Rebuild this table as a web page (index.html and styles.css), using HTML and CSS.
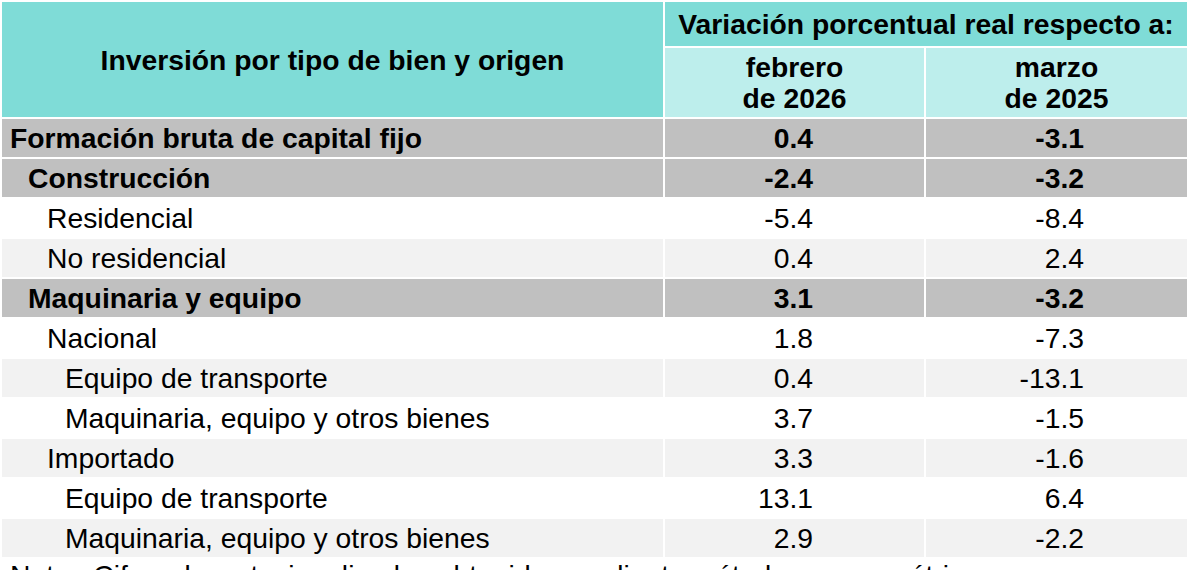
FILE: index.html
```html
<!DOCTYPE html>
<html lang="es">
<head>
<meta charset="utf-8">
<title>Inversión fija bruta</title>
<link rel="stylesheet" href="styles.css">
</head>
<body>
<table class="tabla">
  <colgroup>
    <col class="c-concepto">
    <col class="c-feb">
    <col class="c-mar">
  </colgroup>
  <thead>
    <tr class="h1">
      <th class="th-main" rowspan="2">Inversión por tipo de bien y origen</th>
      <th class="th-var" colspan="2">Variación porcentual real respecto a:</th>
    </tr>
    <tr class="h2">
      <th class="th-sub">febrero<br>de 2026</th>
      <th class="th-sub">marzo<br>de 2025</th>
    </tr>
  </thead>
  <tbody>
    <tr class="row gray bold"><td class="lbl l0">Formación bruta de capital fijo</td><td class="num n1">0.4</td><td class="num n2">-3.1</td></tr>
    <tr class="row gray bold"><td class="lbl l1">Construcción</td><td class="num n1">-2.4</td><td class="num n2">-3.2</td></tr>
    <tr class="row white"><td class="lbl l2">Residencial</td><td class="num n1">-5.4</td><td class="num n2">-8.4</td></tr>
    <tr class="row light"><td class="lbl l2">No residencial</td><td class="num n1">0.4</td><td class="num n2">2.4</td></tr>
    <tr class="row gray bold"><td class="lbl l1">Maquinaria y equipo</td><td class="num n1">3.1</td><td class="num n2">-3.2</td></tr>
    <tr class="row white"><td class="lbl l2">Nacional</td><td class="num n1">1.8</td><td class="num n2">-7.3</td></tr>
    <tr class="row light"><td class="lbl l3">Equipo de transporte</td><td class="num n1">0.4</td><td class="num n2">-13.1</td></tr>
    <tr class="row white"><td class="lbl l3">Maquinaria, equipo y otros bienes</td><td class="num n1">3.7</td><td class="num n2">-1.5</td></tr>
    <tr class="row light"><td class="lbl l2">Importado</td><td class="num n1">3.3</td><td class="num n2">-1.6</td></tr>
    <tr class="row white"><td class="lbl l3">Equipo de transporte</td><td class="num n1">13.1</td><td class="num n2">6.4</td></tr>
    <tr class="row light"><td class="lbl l3">Maquinaria, equipo y otros bienes</td><td class="num n1">2.9</td><td class="num n2">-2.2</td></tr>
  </tbody>
</table>
<p class="nota">Nota:&nbsp;&nbsp;Cifras desestacionalizadas obtenidas mediante métodos econométricos.</p>
</body>
</html>
```
FILE: styles.css
```css
html, body {
  margin: 0;
  padding: 0;
  background: #ffffff;
}
body {
  font-family: "Liberation Sans", Arial, sans-serif;
  color: #000000;
  font-size: 28.3px;
  overflow: hidden;
}
.tabla {
  table-layout: fixed;
  width: 1189px;
  border-collapse: separate;
  border-spacing: 2px;
}
.c-concepto { width: 661px; }
.c-feb { width: 259px; }
.c-mar { width: 261px; }

.tabla th, .tabla td {
  padding: 0;
  vertical-align: middle;
  white-space: nowrap;
}
.tabla th {
  font-weight: bold;
  text-align: center;
}
.tabla .h1 th { height: 44px; line-height: 32px; }
.tabla .th-main {
  background: #7fdcd7;
}
.tabla .th-var {
  background: #7fdcd7;
}
.tabla .h2 th { height: 69px; }
.tabla .th-sub {
  background: #bdeeec;
  line-height: 31px;
}
.tabla .row td {
  height: 38px;
  line-height: 32px;
}
.tabla .gray td { background: #c0c0c0; }
.tabla .light td { background: #f2f2f2; }
.tabla .white td { background: #ffffff; }
.tabla .bold td { font-weight: bold; }

.tabla .lbl { text-align: left; }
.tabla .l0 { padding-left: 8px; }
.tabla .l1 { padding-left: 26px; }
.tabla .l2 { padding-left: 45px; }
.tabla .l3 { padding-left: 63px; }

.tabla .num { text-align: right; }
.tabla .n1 { padding-right: 111px; }
.tabla .n2 { padding-right: 103px; }

.nota {
  margin: 0;
  padding-left: 10px;
  line-height: 32px;
  white-space: nowrap;
}
```
